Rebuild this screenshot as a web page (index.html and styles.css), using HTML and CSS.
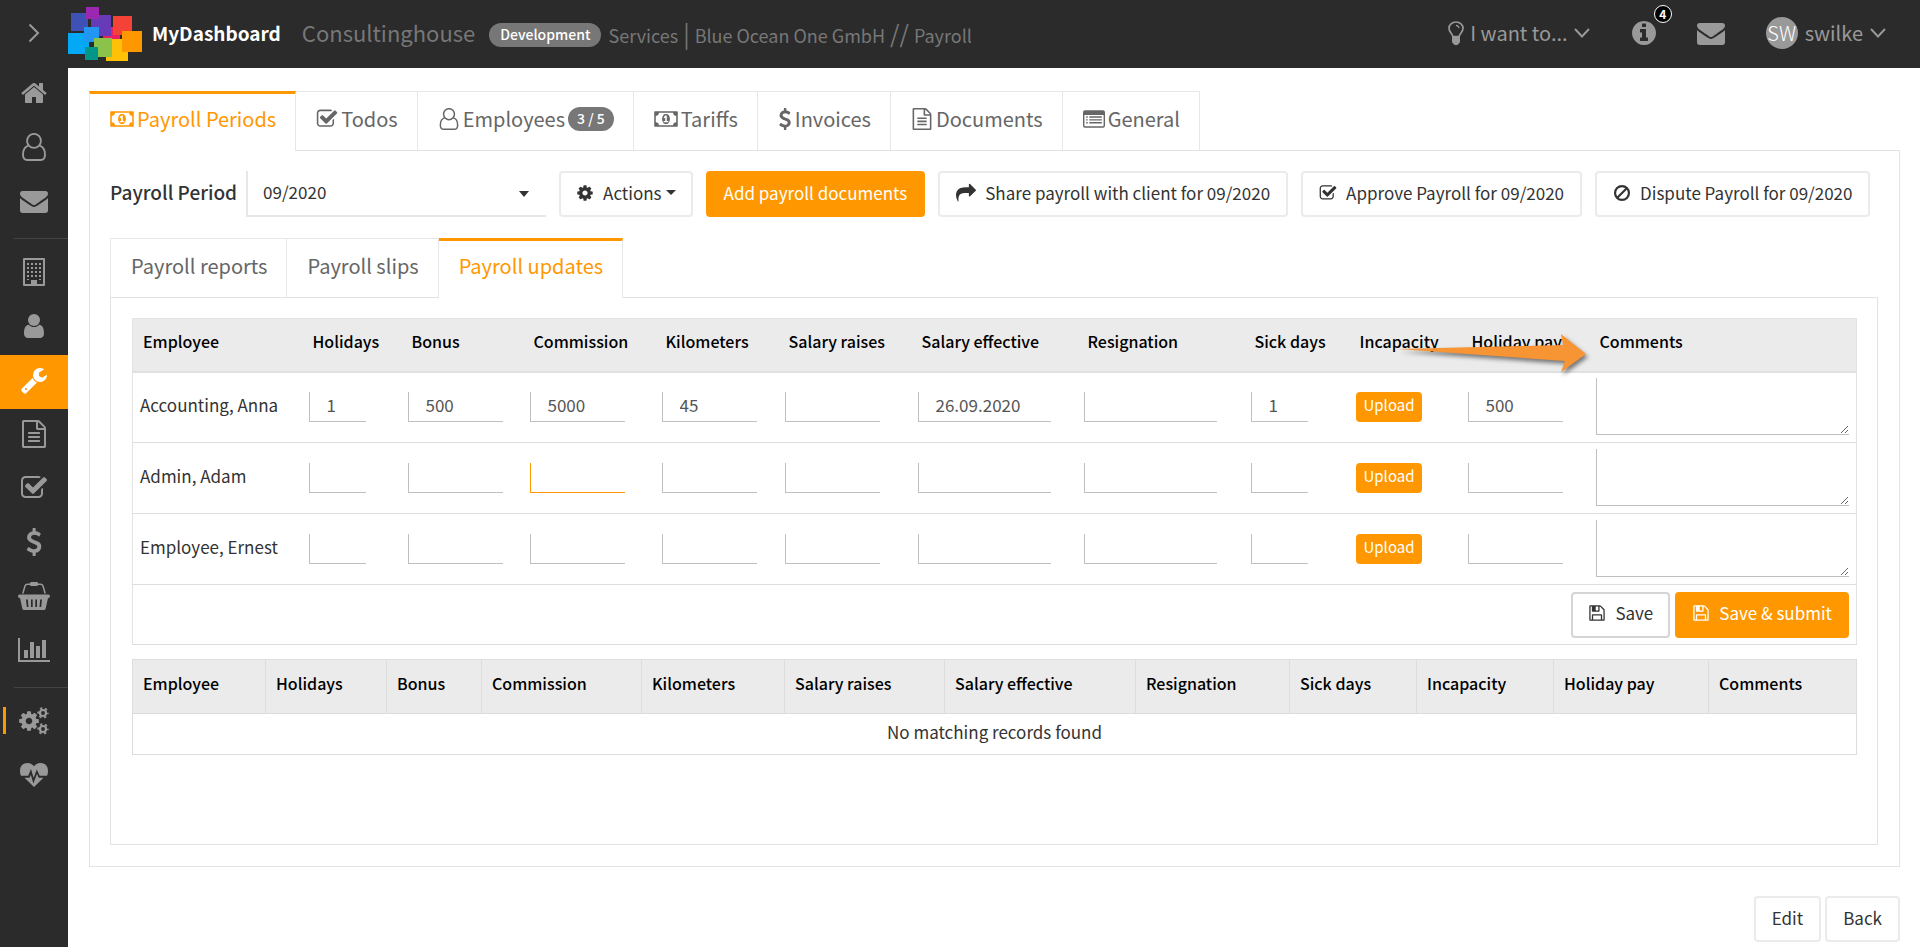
FILE: index.html
```html
<!DOCTYPE html>
<html lang="en">
<head>
<meta charset="utf-8">
<title>MyDashboard - Payroll</title>
<link rel="stylesheet" href="styles.css">
</head>
<body>
<svg class="sprite" aria-hidden="true">
  <symbol id="i-home" viewBox="0 0 1792 1792"><path d="M1472 992v480q0 26-19 45t-45 19h-384v-384h-256v384h-384q-26 0-45-19t-19-45v-480q0-1 .5-3t.5-3l575-474 575 474q1 2 1 6zm223-69l-62 74q-8 9-21 11h-3q-13 0-21-7l-692-577-692 577q-12 8-24 7-13-2-21-11l-62-74q-8-10-7-23.5t11-21.5l719-599q32-26 76-26t76 26l244 204v-195q0-14 9-23t23-9h192q14 0 23 9t9 23v408l219 182q10 8 11 21.5t-7 23.5z"/></symbol>
  <symbol id="i-user-o" viewBox="0 0 28 28"><g fill="none" stroke="currentColor" stroke-width="1.9"><ellipse cx="14" cy="7.9" rx="6.9" ry="7"/><path d="M8.6 12.6C4.6 13.6 3 17.400 3 21.800C3 25 4.800 27 7.300 27h13.400c2.500 0 4.300-2 4.300-5.200 0-4.400-1.600-8.200-5.600-9.200"/></g></symbol>
  <symbol id="i-user" viewBox="0 0 28 28"><circle cx="14" cy="8" r="6"/><path d="M8.700 12.800C5.200 13.300 4 17 4 21.500 4 24.300 5.700 26 8 26h12c2.300 0 4-1.700 4-4.500 0-4.500-1.200-8.200-4.700-8.700-1.500 1.500-3.300 2.300-5.300 2.300s-3.800-.8-5.300-2.300z"/></symbol>
  <symbol id="i-mail" viewBox="0 0 1792 1792"><path d="M1792 710v794q0 66-47 113t-113 47h-1472q-66 0-113-47t-47-113v-794q44 49 101 87 362 246 497 345 57 42 92.500 65.500t94.500 48 110 24.500h2q51 0 110-24.500t94.500-48 92.500-65.500q170-123 498-345 57-39 100-87zm0-294q0 79-49 151t-122 123q-376 261-468 325-10 7-42.500 31t-54 38.500-52 32.500-57.500 27-50 9h-2q-23 0-50-9t-57.500-27-52-32.500-54-38.500-42.500-31q-91-64-262-182.500t-205-142.500q-62-42-117-115.500t-55-136.500q0-78 41.500-130t118.500-52h1472q65 0 112.500 47t47.500 113z"/></symbol>
  <symbol id="i-building" viewBox="0 0 28 28"><path d="M4 0h20q1 0 1 1v26q0 1-1 1H4q-1 0-1-1V1q0-1 1-1zm1 2v24h6v-4h6v4h6V2z" fill-rule="evenodd"/><path d="M8 5v17M12 5v15M16 5v15M20 5v17" fill="none" stroke="currentColor" stroke-width="2" stroke-dasharray="2 2"/></symbol>
  <symbol id="i-wrench" viewBox="0 0 1792 1792"><path d="M448 1472q0-26-19-45t-45-19-45 19-19 45 19 45 45 19 45-19 19-45zm644-420l-682 682q-37 37-90 37-52 0-91-37l-106-108q-38-36-38-90 0-53 38-91l681-681q39 98 114.500 173.500t173.500 114.500zm634-435q0 39-23 106-47 134-164.500 217.500t-258.500 83.500q-185 0-316.500-131.500t-131.500-316.500 131.500-316.500 316.500-131.500q58 0 121.500 16.500t107.500 46.500q16 11 16 28t-16 28l-293 169v224l193 107q5-3 79-48.500t135.500-81 70.500-35.500q15 0 23.500 10t8.500 25z"/></symbol>
  <symbol id="i-file" viewBox="0 0 1792 1792"><path d="M1596 380q28 28 48 76t20 88v1152q0 40-28 68t-68 28h-1344q-40 0-68-28t-28-68v-1600q0-40 28-68t68-28h896q40 0 88 20t76 48zm-444-244v376h376q-10-29-22-41l-313-313q-12-12-41-22zm384 1528v-1024h-416q-40 0-68-28t-28-68v-416h-768v1536h1280zm-1024-864q0-14 9-23t23-9h704q14 0 23 9t9 23v64q0 14-9 23t-23 9h-704q-14 0-23-9t-9-23v-64zm736 224q14 0 23 9t9 23v64q0 14-9 23t-23 9h-704q-14 0-23-9t-9-23v-64q0-14 9-23t23-9h704zm0 256q14 0 23 9t9 23v64q0 14-9 23t-23 9h-704q-14 0-23-9t-9-23v-64q0-14 9-23t23-9h704z"/></symbol>
  <symbol id="i-check" viewBox="0 0 1792 1792"><path d="M1472 930v318q0 119-84.500 203.500t-203.500 84.500h-832q-119 0-203.500-84.500t-84.500-203.500v-832q0-119 84.500-203.500t203.500-84.500h832q63 0 117 25 15 7 18 23 3 17-9 29l-49 49q-10 10-23 10-3 0-9-2-23-6-45-6h-832q-66 0-113 47t-47 113v832q0 66 47 113t113 47h832q66 0 113-47t47-113v-254q0-13 9-22l64-64q10-10 23-10 6 0 12 3 20 8 20 29zm231-489l-814 814q-24 24-57 24t-57-24l-430-430q-24-24-24-57t24-57l110-110q24-24 57-24t57 24l263 263 647-647q24-24 57-24t57 24l110 110q24 24 24 57t-24 57z"/></symbol>
  <symbol id="i-usd" viewBox="384 0 1024 1792"><path d="M1362 1185q0 153-99.500 263.500t-258.500 136.500v175q0 14-9 23t-23 9h-135q-13 0-22.500-9.500t-9.500-22.500v-175q-66-9-127.500-31t-101.500-44.500-74-48-46.500-37.500-17.500-18q-17-21-2-41l103-135q7-10 23-12 15-2 24 9l2 2q113 99 243 125 37 8 74 8 81 0 142.500-43t61.500-122q0-28-15-53t-33.500-42-58.500-37.500-66-32-80-32.500q-39-16-61.500-25t-61.500-26.500-62.500-31-56.500-35.500-53.500-42.500-43.500-49-35.500-58-21-66.500-8.500-78q0-138 98-242t255-134v-180q0-13 9.500-22.500t22.500-9.500h135q14 0 23 9t9 23v176q57 6 110.500 23t87 33.500 63.500 37.500 39 29 15 14q17 18 5 38l-81 146q-8 15-23 16-14 3-27-7-3-3-14.500-12t-39-26.500-58.500-32-74.500-26-85.500-11.500q-95 0-155 43t-60 111q0 26 8.500 48t29.500 41.500 39.500 33 56 31 60.500 27 70 27.500q53 20 81 31.500t76 35 75.500 42.500 62 50 53 63.500 31.500 76.500 13 94z"/></symbol>
  <symbol id="i-basket" viewBox="0 0 32 28"><path d="M1.500 12.500h29q1.500 0 1.500 1.800t-1.500 1.800h-.5l-2.300 10.300q-.4 1.600-2 1.600H6.300q-1.600 0-2-1.600L2 16.100h-.5Q0 16.100 0 14.300t1.500-1.800zM8 17.500l.8 7.500h1.700l-.7-7.500zm5 0v7.500h1.700v-7.500zm4.300 0v7.500H19v-7.500zm4.900 0-.7 7.500h1.700l.8-7.500z" fill-rule="evenodd"/><path d="M4.800 11.500 7 4q.6-1.800 2.500-1.800h13Q24.400 2.200 25 4l2.200 7.500" fill="none" stroke="currentColor" stroke-width="1.500"/><rect x="12" y="0" width="8" height="4" rx="1.200"/></symbol>
  <symbol id="i-chart" viewBox="0 0 2048 1792"><path d="M640 896v512h-256v-512h256zm384-512v1024h-256v-1024h256zm1024 1152v128h-2048v-1536h128v1408h1920zm-640-896v768h-256v-768h256zm384-384v1152h-256v-1152h256z"/></symbol>
  <symbol id="i-cog" viewBox="0 0 1792 1792"><path d="M1152 896q0-106-75-181t-181-75-181 75-75 181 75 181 181 75 181-75 75-181zm512-109v222q0 12-8 23t-20 13l-185 28q-19 54-39 91 35 50 107 138 10 12 10 25t-9 23q-27 37-99 108t-94 71q-12 0-26-9l-138-108q-44 23-91 38-16 136-29 186-7 28-36 28h-222q-14 0-24.500-8.500t-11.500-21.500l-28-184q-49-16-90-37l-141 107q-10 9-25 9-14 0-25-11-126-114-165-168-7-10-7-23 0-12 8-23 15-21 51-66.500t54-70.500q-27-50-41-99l-183-27q-13-2-21-12.500t-8-23.500v-222q0-12 8-23t19-13l186-28q14-46 39-92-40-57-107-138-10-12-10-24 0-10 9-23 26-36 98.500-107.500t94.500-71.500q13 0 26 10l138 107q44-23 91-38 16-136 29-186 7-28 36-28h222q14 0 24.500 8.500t11.500 21.500l28 184q49 16 90 37l142-107q9-9 24-9 13 0 25 10 129 119 165 170 7 8 7 22 0 12-8 23-15 21-51 66.500t-54 70.500q26 50 41 98l183 28q13 2 21 12.500t8 23.500z"/></symbol>
  <symbol id="i-cogs" viewBox="0 0 30 28"><use href="#i-cog" x="-1.500" y="2.500" width="23" height="23"/><g fill="none" stroke="currentColor"><circle cx="24" cy="6" r="3" stroke-width="2.200"/><circle cx="24" cy="6" r="4.800" stroke-width="1.800" stroke-dasharray="2.300 2.730" stroke-dashoffset="1.100"/><circle cx="24" cy="22" r="3" stroke-width="2.200"/><circle cx="24" cy="22" r="4.800" stroke-width="1.800" stroke-dasharray="2.300 2.730" stroke-dashoffset="1.100"/></g></symbol>
  <symbol id="i-heart" viewBox="0 0 28 24"><path d="M14 24 4.500 14.800H9.500l1.300-3 2.600 8.700 3.600-9.700 1.700 4h4.800L14 24zM1 12.800Q0 10.500 0 7.900C0 3 3 0 7.500 0 10.500 0 12.500 1.700 14 3.300 15.500 1.700 17.500 0 20.500 0 25 0 28 3 28 7.900q0 2.600-1 4.900h-7.300L16.800 6.500 13.600 15 11 6l-2.800 6.800z"/></symbol>
  <symbol id="i-money" viewBox="0 0 1920 1792"><path d="M768 1152h384v-96h-128v-448h-114l-148 137 77 80q42-37 55-57h2v288h-128v96zm512-256q0 70-21 142t-59.500 134-101.500 101-138 39-138-39-101.500-101-59.500-134-21-142 21-142 59.500-134 101.500-101 138-39 138 39 101.500 101 59.500 134 21 142zm512 256v-512q-106 0-181-75t-75-181h-1152q0 106-75 181t-181 75v512q106 0 181 75t75 181h1152q0-106 75-181t181-75zm128-832v1152q0 26-19 45t-45 19h-1792q-26 0-45-19t-19-45v-1152q0-26 19-45t45-19h1792q26 0 45 19t19 45z"/></symbol>
  <symbol id="i-list" viewBox="0 0 28 28"><path d="M2.500 3h23Q28 3 28 5.500v17q0 2.500-2.500 2.500h-23Q0 25 0 22.500v-17Q0 3 2.500 3zM1.800 9v13.300q0 .9.900.9h22.600q.9 0 .9-.9V9z" fill-rule="evenodd"/><path d="M4 11.500h2M4 15.100h2M4 18.700h2M8 11.500h16M8 15.100h16M8 18.700h16" stroke="currentColor" stroke-width="1.800"/></symbol>
  <symbol id="i-share" viewBox="0 0 1792 1792"><path d="M1792 640q0 26-19 45l-512 512q-19 19-45 19t-45-19-19-45v-256h-224q-98 0-175.500 6t-154 21.500-133 42.500-105.500 69.500-80 101-48.500 138.500-17.500 181q0 55 5 123 0 6 2.500 23.500t2.500 26.500q0 15-8.500 25t-23.500 10q-16 0-28-17-7-9-13-22t-13.500-30-10.500-24q-127-285-127-451 0-199 53-333 162-403 875-403h224v-256q0-26 19-45t45-19 45 19l512 512q19 19 19 45z"/></symbol>
  <symbol id="i-ban" viewBox="0 0 28 28"><g fill="none" stroke="currentColor" stroke-width="3.400"><circle cx="14" cy="14" r="10.800"/><path d="M21 7 7 21"/></g></symbol>
  <symbol id="i-save" viewBox="0 0 1792 1792"><path d="M512 1536h768v-384h-768v384zm896 0h128v-896q0-14-10-38.500t-20-34.500l-281-281q-10-10-34-20t-39-10v416q0 40-28 68t-68 28h-576q-40 0-68-28t-28-68v-416h-128v1280h128v-416q0-40 28-68t68-28h832q40 0 68 28t28 68v416zm-384-928v-320q0-13-9.500-22.500t-22.500-9.500h-192q-13 0-22.500 9.500t-9.500 22.500v320q0 13 9.500 22.500t22.500 9.500h192q13 0 22.500-9.500t9.500-22.500zm640 32v928q0 40-28 68t-68 28h-1344q-40 0-68-28t-28-68v-1344q0-40 28-68t68-28h928q40 0 88 20t76 48l280 280q28 28 48 76t20 88z"/></symbol>
  <symbol id="i-info" viewBox="0 0 1792 1792"><path d="M1152 1376v-160q0-14-9-23t-23-9h-96v-512q0-14-9-23t-23-9h-320q-14 0-23 9t-9 23v160q0 14 9 23t23 9h96v320h-96q-14 0-23 9t-9 23v160q0 14 9 23t23 9h448q14 0 23-9t9-23zm-128-896v-160q0-14-9-23t-23-9h-192q-14 0-23 9t-9 23v160q0 14 9 23t23 9h192q14 0 23-9t9-23zm640 416q0 209-103 385.500t-279.500 279.500-385.500 103-385.500-103-279.500-279.500-103-385.500 103-385.500 279.500-279.500 385.500-103 385.500 103 279.500 279.500 103 385.500z"/></symbol>
  <symbol id="i-down" viewBox="0 0 16 10"><path d="M1 1l7 7.500L15 1" fill="none" stroke="currentColor" stroke-width="1.900"/></symbol>
  <symbol id="i-right" viewBox="0 0 12 20"><path d="M1.500 1.500 10 10l-8.500 8.500" fill="none" stroke="currentColor" stroke-width="2"/></symbol>
  <symbol id="i-bulb" viewBox="0 0 16 24"><path d="M4.800 15.500C4.500 12.500 1 11.500 1 7.300 1 3.700 4 1 8 1s7 2.700 7 6.300c0 4.200-3.500 5.200-3.800 8.200z" fill="none" stroke="currentColor" stroke-width="1.700"/><path d="M4 15.500h8v5.200Q12 22 10.800 22.500L9.500 24h-3l-1.300-1.500Q4 22 4 20.700z"/><path d="M8 4.300q2.700.2 3 2.700" fill="none" stroke="currentColor" stroke-width="1.200"/></symbol>
</svg>

<header class="topbar">
  <button class="toggle" aria-label="Expand menu"><svg class="ic-toggle"><use href="#i-right"/></svg></button>
  <a class="brand" href="#">
    <svg class="logo" viewBox="0 0 74 68" aria-hidden="true">
      <rect x="3" y="13" width="17" height="18" fill="#3f51b5"/>
      <rect x="35" y="27" width="17" height="12" fill="#e91e63"/>
      <rect x="23" y="15" width="20" height="21" fill="#673ab7"/>
      <rect x="18" y="7" width="13" height="12" fill="#9c27b0"/>
      <rect x="45" y="16" width="19" height="19" fill="#f44336"/>
      <rect x="0" y="33" width="21" height="21" fill="#03a9f4"/>
      <rect x="16" y="27" width="15" height="15" fill="#2196f3"/>
      <rect x="38" y="39" width="22" height="22" fill="#ffc107"/>
      <rect x="54" y="31" width="20" height="21" fill="#ff9800"/>
      <rect x="26" y="38" width="18" height="19" fill="#8bc34a"/>
      <rect x="17" y="47" width="13" height="13" fill="#009688"/>
    </svg>
    <span class="brand-name">MyDashboard</span>
  </a>
  <span class="tenant">Consultinghouse</span>
  <span class="env">Development</span>
  <nav class="crumbs" aria-label="Breadcrumb"><a href="#">Services</a><span class="sep">|</span><a href="#">Blue Ocean One GmbH</a><span class="sep">//</span><a href="#">Payroll</a></nav>
  <div class="top-actions">
    <button class="want"><svg class="ic-bulb"><use href="#i-bulb"/></svg>I want to...<svg class="ic-down"><use href="#i-down"/></svg></button>
    <button class="info" aria-label="Notifications"><svg class="ic-28"><use href="#i-info"/></svg><span class="count">4</span></button>
    <button class="inbox" aria-label="Messages"><svg class="ic-28"><use href="#i-mail"/></svg></button>
    <button class="account"><span class="avatar">SW</span>swilke<svg class="ic-down"><use href="#i-down"/></svg></button>
  </div>
</header>

<div class="shell">
  <nav class="sidebar" aria-label="Main">
    <a href="#" aria-label="Home"><svg class="ic-28"><use href="#i-home"/></svg></a>
    <a href="#" aria-label="Profile"><svg class="ic-28"><use href="#i-user-o"/></svg></a>
    <a href="#" aria-label="Messages"><svg class="ic-28"><use href="#i-mail"/></svg></a>
    <hr>
    <a href="#" aria-label="Companies"><svg class="ic-28"><use href="#i-building"/></svg></a>
    <a href="#" aria-label="Contacts"><svg class="ic-28"><use href="#i-user"/></svg></a>
    <a href="#" class="current" aria-label="Services"><svg class="ic-28"><use href="#i-wrench"/></svg></a>
    <a href="#" aria-label="Documents"><svg class="ic-28"><use href="#i-file"/></svg></a>
    <a href="#" aria-label="Todos"><svg class="ic-28"><use href="#i-check"/></svg></a>
    <a href="#" aria-label="Invoices"><svg class="ic-28"><use href="#i-usd"/></svg></a>
    <a href="#" aria-label="Orders"><svg class="ic-32"><use href="#i-basket"/></svg></a>
    <a href="#" aria-label="Statistics"><svg class="ic-32"><use href="#i-chart"/></svg></a>
    <hr>
    <a href="#" class="marked" aria-label="Administration"><svg class="ic-30"><use href="#i-cogs"/></svg></a>
    <a href="#" aria-label="Health"><svg class="ic-heart"><use href="#i-heart"/></svg></a>
  </nav>

  <main class="content">
    <nav class="tabs" aria-label="Payroll sections">
      <a class="tab active" href="#"><svg class="ic-money"><use href="#i-money"/></svg>Payroll Periods</a>
      <a class="tab" href="#"><svg class="ic-22"><use href="#i-check"/></svg>Todos</a>
      <a class="tab" href="#"><svg class="ic-22"><use href="#i-user-o"/></svg>Employees<span class="pill">3 / 5</span></a>
      <a class="tab" href="#"><svg class="ic-money"><use href="#i-money"/></svg>Tariffs</a>
      <a class="tab" href="#"><svg class="ic-usd"><use href="#i-usd"/></svg>Invoices</a>
      <a class="tab" href="#"><svg class="ic-22"><use href="#i-file"/></svg>Documents</a>
      <a class="tab" href="#"><svg class="ic-22"><use href="#i-list"/></svg>General</a>
    </nav>

    <section class="panel outer">
      <div class="toolbar">
        <label class="period-label" for="period">Payroll Period</label>
        <div class="select-wrap"><select id="period"><option>09/2020</option></select></div>
        <button class="btn actions"><svg class="ic-18"><use href="#i-cog"/></svg>Actions<span class="caret"></span></button>
        <button class="btn primary">Add payroll documents</button>
        <button class="btn"><svg class="ic-20"><use href="#i-share"/></svg>Share payroll with client for 09/2020</button>
        <button class="btn"><svg class="ic-18"><use href="#i-check"/></svg>Approve Payroll for 09/2020</button>
        <button class="btn"><svg class="ic-18"><use href="#i-ban"/></svg>Dispute Payroll for 09/2020</button>
      </div>

      <nav class="tabs" aria-label="Payroll views">
        <a class="tab" href="#">Payroll reports</a>
        <a class="tab" href="#">Payroll slips</a>
        <a class="tab active" href="#">Payroll updates</a>
      </nav>

      <section class="panel inner">
        <table class="updates">
          <colgroup><col class="w170"><col class="w99"><col class="w122"><col class="w132"><col class="w123"><col class="w133"><col class="w166"><col class="w167"><col class="w105"><col class="w112"><col class="w128"><col class="w267"></colgroup>
          <thead>
            <tr><th>Employee</th><th>Holidays</th><th>Bonus</th><th>Commission</th><th>Kilometers</th><th>Salary raises</th><th>Salary effective</th><th>Resignation</th><th>Sick days</th><th>Incapacity</th><th>Holiday pay</th><th class="pointed">Comments<svg class="arrow" viewBox="0 0 194 46" aria-hidden="true"><path d="M2 16 167 12 165 1 190 21 165 39 169 28z"/></svg></th></tr>
          </thead>
          <tbody>
            <tr><td>Accounting, Anna</td>
              <td><input class="short" aria-label="Holidays" value="1"></td><td><input aria-label="Bonus" value="500"></td><td><input aria-label="Commission" value="5000"></td><td><input aria-label="Kilometers" value="45"></td><td><input aria-label="Salary raises"></td><td><input class="long" aria-label="Salary effective" value="26.09.2020"></td><td><input class="long" aria-label="Resignation"></td><td><input class="short" aria-label="Sick days" value="1"></td><td><button class="upload">Upload</button></td><td><input aria-label="Holiday pay" value="500"></td><td><textarea aria-label="Comments"></textarea></td></tr>
            <tr><td>Admin, Adam</td>
              <td><input class="short" aria-label="Holidays"></td><td><input aria-label="Bonus"></td><td><input class="focused" aria-label="Commission"></td><td><input aria-label="Kilometers"></td><td><input aria-label="Salary raises"></td><td><input class="long" aria-label="Salary effective"></td><td><input class="long" aria-label="Resignation"></td><td><input class="short" aria-label="Sick days"></td><td><button class="upload">Upload</button></td><td><input aria-label="Holiday pay"></td><td><textarea aria-label="Comments"></textarea></td></tr>
            <tr><td>Employee, Ernest</td>
              <td><input class="short" aria-label="Holidays"></td><td><input aria-label="Bonus"></td><td><input aria-label="Commission"></td><td><input aria-label="Kilometers"></td><td><input aria-label="Salary raises"></td><td><input class="long" aria-label="Salary effective"></td><td><input class="long" aria-label="Resignation"></td><td><input class="short" aria-label="Sick days"></td><td><button class="upload">Upload</button></td><td><input aria-label="Holiday pay"></td><td><textarea aria-label="Comments"></textarea></td></tr>
          </tbody>
          <tfoot>
            <tr><td colspan="12"><div class="form-actions"><button class="btn strong"><svg class="ic-18"><use href="#i-save"/></svg>Save</button><button class="btn primary"><svg class="ic-18"><use href="#i-save"/></svg>Save &amp; submit</button></div></td></tr>
          </tfoot>
        </table>

        <table class="records">
          <colgroup><col class="w133"><col class="w121"><col class="w95"><col class="w160"><col class="w143"><col class="w160"><col class="w191"><col class="w154"><col class="w127"><col class="w137"><col class="w155"><col class="w148"></colgroup>
          <thead>
            <tr><th>Employee</th><th>Holidays</th><th>Bonus</th><th>Commission</th><th>Kilometers</th><th>Salary raises</th><th>Salary effective</th><th>Resignation</th><th>Sick days</th><th>Incapacity</th><th>Holiday pay</th><th>Comments</th></tr>
          </thead>
          <tbody><tr><td colspan="12">No matching records found</td></tr></tbody>
        </table>
      </section>
    </section>

    <div class="page-actions"><button class="btn">Edit</button><button class="btn">Back</button></div>
  </main>
</div>
</body>
</html>
```
FILE: styles.css
```css
* { box-sizing: border-box; }

body {
  margin: 0;
  font: 17px/24px "Noto Sans CJK SC", "Noto Sans", sans-serif;
  color: #333;
  background: #fff;
}

a { color: inherit; text-decoration: none; }
button, input, select, textarea { font: inherit; color: inherit; margin: 0; }
button { background: none; border: 0; padding: 0; cursor: pointer; }
svg { fill: currentColor; flex: none; display: block; }
.sprite { position: absolute; width: 0; height: 0; }

.ic-18 { width: 18px; height: 18px; }
.ic-20 { width: 20px; height: 20px; }
.ic-22 { width: 22px; height: 22px; }
.ic-28 { width: 28px; height: 28px; }
.ic-30 { width: 30px; height: 28px; }
.ic-32 { width: 32px; height: 28px; }
.ic-heart { width: 28px; height: 24px; }
.ic-money { width: 24px; height: 22px; }
.ic-usd { width: 14px; height: 22px; }
.ic-down { width: 16px; height: 10px; }
.ic-toggle { width: 12px; height: 20px; }
.ic-bulb { width: 16px; height: 24px; }

/* Top bar */
.topbar {
  display: flex;
  align-items: center;
  height: 68px;
  padding: 0 34px 2px 0;
  background: #2b2b2b;
  color: #999;
}
.toggle { width: 68px; display: flex; justify-content: center; }
.brand { display: flex; align-items: center; gap: 10px; color: #fff; }
.logo { width: 74px; height: 68px; margin-top: 2px; }
.brand-name { font-size: 19px; font-weight: 700; }
.tenant { margin-left: 21px; padding-bottom: 3px; font-size: 22px; color: #777; }
.env {
  margin: 4px 7px 0 14px;
  padding: 0 11px 2px;
  border-radius: 13px;
  background: #777;
  color: #fff;
  font-size: 14px;
  font-weight: 500;
  line-height: 22px;
}
.crumbs { display: flex; align-items: center; margin-top: 3px; font-size: 18px; color: #777; }
.sep { margin: 0 5px; padding-bottom: 3px; font-size: 24px; }
.top-actions { display: flex; align-items: center; margin-left: auto; font-size: 20px; }
.want { display: flex; align-items: center; gap: 6px; }
.info { position: relative; margin-left: 40px; }
.count {
  position: absolute;
  left: 24px;
  top: -14px;
  width: 18px;
  height: 18px;
  border: 1px solid #fff;
  border-radius: 9px;
  background: #000;
  color: #fff;
  font-size: 12px;
  font-weight: 700;
  line-height: 15px;
}
.inbox { margin-left: 39px; }
.account { display: flex; align-items: center; gap: 7px; margin-left: 41px; }
.avatar {
  width: 32px;
  height: 32px;
  border-radius: 50%;
  background: #999;
  color: #fff;
  font-weight: 300;
  line-height: 32px;
}

/* Side navigation */
.shell { display: flex; min-height: calc(100vh - 68px); }
.sidebar { flex: none; width: 68px; background: #2b2b2b; color: #999; }
.sidebar a {
  display: flex;
  align-items: center;
  justify-content: center;
  height: 54px;
  padding-bottom: 5px;
}
.sidebar hr { height: 1px; margin: 8px 0 8px 14px; border: 0; background: #444; }
.sidebar .current { background: #ff9800; color: #fff; }
.sidebar .marked { position: relative; }
.marked::before {
  content: "";
  position: absolute;
  left: 3px;
  top: 11px;
  width: 3px;
  height: 27px;
  background: #ff9800;
}

/* Tabs and panels */
.content { flex: 1; min-width: 0; padding: 23px 20px 4px 21px; }
.tabs { display: flex; }
.tab {
  display: flex;
  align-items: center;
  gap: 3px;
  height: 59px;
  padding: 0 19px 5px 20px;
  border-top: 1px solid #e7e7e7;
  border-right: 1px solid #e7e7e7;
  font-size: 20px;
  color: #666;
}
.tab:first-child { border-left: 1px solid #e7e7e7; }
.tab.active {
  height: 60px;
  margin-bottom: -1px;
  padding-bottom: 8px;
  border-top: 3px solid #ff9800;
  background: #fff;
  color: #ff9800;
}
.pill {
  padding: 0 9px 2px;
  border-radius: 13px;
  background: #777;
  color: #fff;
  font-size: 14px;
  font-weight: 500;
  line-height: 22px;
}
.panel { border: 1px solid #e3e3e3; }
.outer { padding: 20px 21px 21px 20px; }
.inner { min-height: 548px; padding: 20px 22px 21px 21px; }

.toolbar { display: flex; align-items: center; gap: 13px; margin-bottom: 21px; }
.period-label { padding-bottom: 4px; font-size: 19px; font-weight: 500; margin-right: -4px; }
.select-wrap { position: relative; flex: 0 1 300px; }
.select-wrap::after {
  content: "";
  position: absolute;
  right: 17px;
  top: 20px;
  border: 5px solid transparent;
  border-top: 6px solid #333;
  border-bottom: 0;
}
select {
  appearance: none;
  display: block;
  width: 100%;
  height: 46px;
  padding: 0 16px 2px 15px;
  border: 0;
  border-left: 2px solid #e7e7e7;
  border-bottom: 2px solid #e7e7e7;
  border-radius: 0;
  background: #fff;
}
.btn {
  display: flex;
  align-items: center;
  gap: 9px;
  height: 46px;
  padding: 0 16px 3px;
  border: 2px solid #ebebeb;
  border-radius: 4px;
  background: #fff;
  white-space: nowrap;
}
.btn.primary { border-color: #ff9800; background: #ff9800; color: #fff; }
.btn.strong { border-color: #d5d5d5; }
.btn.actions { padding: 0 15px 3px; }
.actions .caret { margin-left: -5px; }
.caret { border: 5px solid transparent; border-top: 5px solid #333; border-bottom: 0; }
.form-actions .btn { padding: 0 15px 3px; }

/* Tables */
table { width: 100%; border-collapse: collapse; table-layout: fixed; }
th {
  height: 54px;
  padding: 0 0 8px 10px;
  background: #ebebeb;
  color: #000;
  font-size: 16px;
  font-weight: 500;
  text-align: left;
  white-space: nowrap;
}
.updates { border: 1px solid #e3e3e3; }
.updates th { height: 53px; border-bottom: 2px solid #e0e0e0; }
.updates td { height: 71px; padding: 0 7px 1px 6px; border-bottom: 1px solid #ddd; white-space: nowrap; }
.updates td:first-child { padding: 0 7px 4px; }
.updates tfoot td { height: 60px; }
.updates tfoot td:first-child { padding-bottom: 0; }
.updates input {
  display: block;
  width: 95px;
  height: 30px;
  padding: 0 16px 3px 17px;
  border: 0;
  border-left: 1px solid #c0c0c0;
  border-bottom: 1px solid #c0c0c0;
  background: #fff;
  color: #555;
  outline: 0;
}
.updates .short { width: 57px; }
.updates .long { width: 133px; }
.updates .focused { border-color: #ff9800; }
.updates textarea {
  display: block;
  width: 100%;
  height: 57px;
  border: 0;
  border-left: 1px solid #c0c0c0;
  border-bottom: 1px solid #c0c0c0;
}
.upload {
  display: block;
  height: 30px;
  padding: 0 8px 3px;
  border-radius: 4px;
  background: #ff9800;
  color: #fff;
  font-size: 15px;
}
.form-actions { display: flex; justify-content: flex-end; gap: 5px; }
.pointed { position: relative; }
.arrow {
  position: absolute;
  right: 100%;
  top: 14px;
  width: 194px;
  height: 46px;
  fill: #f79433;
  filter: drop-shadow(2px 3px 2px rgba(0, 0, 0, .5));
}

.records { margin-top: 14px; }
.records th, .records td { border: 1px solid #ddd; }
.records td { height: 41px; padding: 0 0 5px; text-align: center; }

.w95 { width: 95px; }
.w99 { width: 99px; }
.w105 { width: 105px; }
.w112 { width: 112px; }
.w121 { width: 121px; }
.w122 { width: 122px; }
.w123 { width: 123px; }
.w127 { width: 127px; }
.w128 { width: 128px; }
.w132 { width: 132px; }
.w133 { width: 133px; }
.w137 { width: 137px; }
.w143 { width: 143px; }
.w148 { width: 148px; }
.w154 { width: 154px; }
.w155 { width: 155px; }
.w160 { width: 160px; }
.w166 { width: 166px; }
.w167 { width: 167px; }
.w170 { width: 170px; }
.w191 { width: 191px; }
.w267 { width: 267px; }

.page-actions { display: flex; justify-content: flex-end; gap: 4px; margin-top: 29px; }
```
